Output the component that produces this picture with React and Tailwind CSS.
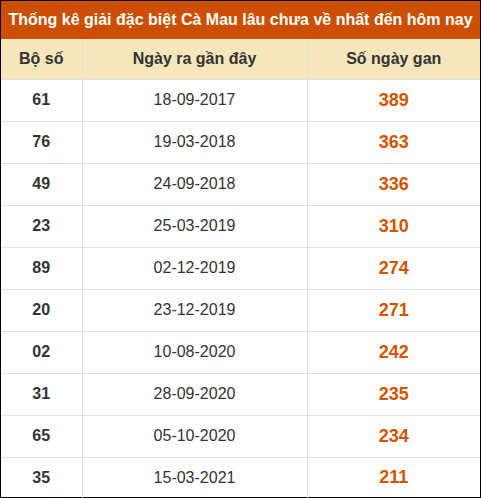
import React from "react";

const rows = [
  ["61", "18-09-2017", "389"],
  ["76", "19-03-2018", "363"],
  ["49", "24-09-2018", "336"],
  ["23", "25-03-2019", "310"],
  ["89", "02-12-2019", "274"],
  ["20", "23-12-2019", "271"],
  ["02", "10-08-2020", "242"],
  ["31", "28-09-2020", "235"],
  ["65", "05-10-2020", "234"],
  ["35", "15-03-2021", "211"],
];

export default function App() {
  return (
    <div className="w-[481px] h-[498px] border border-black bg-white" style={{ fontFamily: '"Liberation Sans", Arial, sans-serif' }}>
      <div className="h-[38px] bg-[#cc4e00] text-white font-bold text-[16px] flex items-center justify-center">
        Thống kê giải đặc biệt Cà Mau lâu chưa về nhất đến hôm nay
      </div>
      <table className="w-full border-collapse table-fixed">
        <colgroup>
          <col className="w-[81px]" />
          <col className="w-[225px]" />
          <col />
        </colgroup>
        <thead>
          <tr className="h-[40px] bg-[#f5e6bc] text-[#333] text-[16px] font-bold">
            <th className="border-r border-b border-[#e0e0e0] font-bold">Bộ số</th>
            <th className="border-r border-b border-[#e0e0e0] font-bold">Ngày ra gần đây</th>
            <th className="border-b border-[#e0e0e0] font-bold">Số ngày gan</th>
          </tr>
        </thead>
        <tbody>
          {rows.map((r, i) => (
            <tr key={i} className={i === rows.length - 1 ? "h-[41px]" : "h-[42px]"}>
              <td className={`text-center font-bold text-[16px] text-[#333] border-r border-[#e0e0e0] ${i < rows.length - 1 ? "border-b" : ""}`}>{r[0]}</td>
              <td className={`text-center text-[16px] text-[#333] border-r border-[#e0e0e0] ${i < rows.length - 1 ? "border-b" : ""}`}>{r[1]}</td>
              <td className={`text-center font-bold text-[18px] text-[#d35400] border-[#e0e0e0] ${i < rows.length - 1 ? "border-b" : ""}`}>{r[2]}</td>
            </tr>
          ))}
        </tbody>
      </table>
    </div>
  );
}
